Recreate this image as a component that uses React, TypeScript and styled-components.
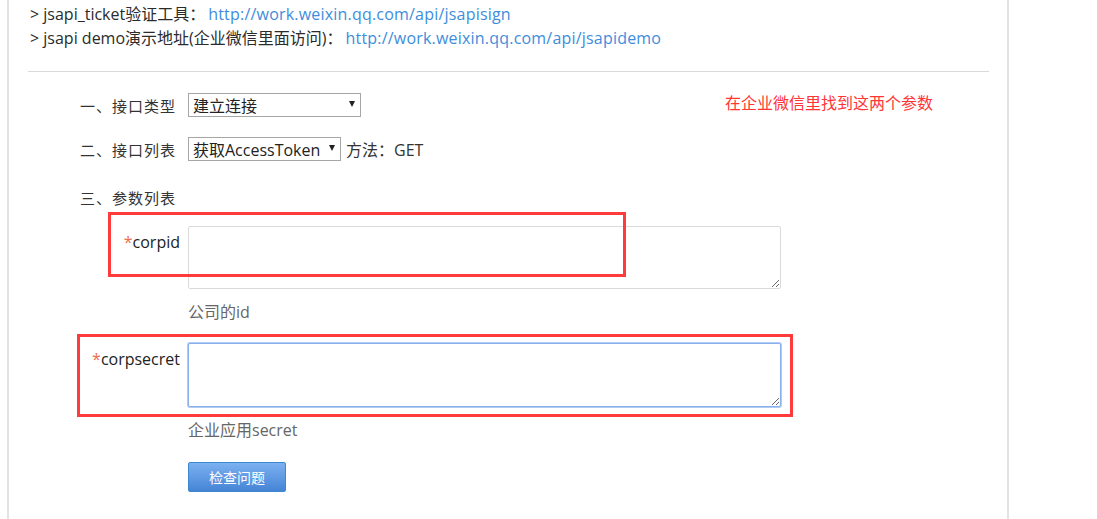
import React from "react";
import styled, { createGlobalStyle } from "styled-components";

const FONT = `"Open Sans", "Noto Sans CJK SC", sans-serif`;

const GlobalStyle = createGlobalStyle`
  html, body {
    margin: 0;
    padding: 0;
    background: #ffffff;
  }
  body {
    font-family: ${FONT};
    color: #333333;
  }
`;

const Page = styled.div`
  position: relative;
  width: 1097px;
  height: 519px;
  overflow: hidden;
`;

const Panel = styled.div`
  box-sizing: border-box;
  margin-left: 7px;
  width: 1002px;
  height: 519px;
  border-left: 2px solid #e3e3e3;
  border-right: 2px solid #e3e3e3;
  padding: 2px 18px 0 19px;
`;

const IntroLine = styled.div`
  padding-left: 2px;
  font-size: 16px;
  line-height: 24px;
  color: #2b2b2b;
  white-space: nowrap;
`;

const Link = styled.a`
  color: #3e8ddc;
  text-decoration: none;
  margin-left: 3px;
  letter-spacing: 0.2px;
`;

const Divider = styled.div`
  margin-top: 21px;
  height: 1px;
  background: #d9d9d9;
`;

const Form = styled.div`
  display: flex;
  flex-direction: column;
  padding-left: 52px;
  padding-top: 21px;
`;

const Row = styled.div<{ $mt?: number }>`
  display: flex;
  align-items: center;
  gap: 8px;
  height: 24px;
  margin-top: ${(p) => p.$mt ?? 0}px;
  font-size: 16px;
  color: #333333;
`;

const RowLabel = styled.div`
  width: 100px;
  white-space: nowrap;
  font-size: 15px;
  letter-spacing: 1px;
`;

const SelectBox = styled.div<{ $w: number }>`
  box-sizing: border-box;
  width: ${(p) => p.$w}px;
  height: 24px;
  border: 1px solid #a6a6a6;
  background: #ffffff;
  display: flex;
  align-items: center;
  justify-content: space-between;
  padding: 0 5px 0 4px;
  font-size: 16px;
  color: #222222;
  white-space: nowrap;
  overflow: hidden;
`;

const Arrow = styled.span`
  flex: none;
  width: 0;
  height: 0;
  border-left: 3.5px solid transparent;
  border-right: 3.5px solid transparent;
  border-top: 6px solid #222222;
  margin-top: -2px;
`;

const Method = styled.span`
  margin-left: -3px;
  font-size: 16px;
`;

const ParamRow = styled.div<{ $mt: number }>`
  display: flex;
  align-items: flex-start;
  gap: 8px;
  margin-top: ${(p) => p.$mt}px;
`;

const ParamLabel = styled.div`
  width: 100px;
  text-align: right;
  font-size: 16px;
  line-height: 24px;
  padding-top: 4px;
  color: #222222;
  white-space: nowrap;
`;

const Star = styled.span`
  color: #ef6c4e;
`;

const Area = styled.textarea<{ $focus?: boolean }>`
  box-sizing: border-box;
  width: 593px;
  height: ${(p) => (p.$focus ? 64 : 63)}px;
  margin: 0;
  border: 1px solid ${(p) => (p.$focus ? "#88b0ee" : "#dadada")};
  box-shadow: ${(p) => (p.$focus ? "0 0 0 1px #b2cbf3" : "none")};
  border-radius: 2px;
  outline: none;
  resize: both;
  font-family: inherit;
  font-size: 14px;
  background: #ffffff;
`;

const Hint = styled.div`
  margin-left: 108px;
  margin-top: 11px;
  font-size: 16px;
  line-height: 24px;
  color: #666666;
`;

const Button = styled.button`
  box-sizing: border-box;
  margin-left: 108px;
  margin-top: 20px;
  width: 98px;
  height: 30px;
  border: 1px solid #3d87cf;
  border-radius: 2px;
  background: linear-gradient(to bottom, #7cb1f1, #4584d5);
  color: #ffffff;
  font-family: ${FONT};
  font-size: 14px;
  padding: 0;
  align-self: flex-start;
`;

const Note = styled.div`
  position: absolute;
  left: 725px;
  top: 91px;
  font-size: 16px;
  line-height: 24px;
  color: #ff3535;
  white-space: nowrap;
`;

const Highlight = styled.div<{ $x: number; $y: number; $w: number; $h: number }>`
  position: absolute;
  box-sizing: border-box;
  left: ${(p) => p.$x}px;
  top: ${(p) => p.$y}px;
  width: ${(p) => p.$w}px;
  height: ${(p) => p.$h}px;
  border: 3px solid #ff3b3b;
  pointer-events: none;
`;

export default function App() {
  return (
    <>
      <GlobalStyle />
      <Page>
        <Panel>
          <IntroLine>
            &gt; jsapi_ticket验证工具：
            <Link href="#">http://work.weixin.qq.com/api/jsapisign</Link>
          </IntroLine>
          <IntroLine>
            &gt; jsapi demo演示地址(企业微信里面访问)：
            <Link href="#">http://work.weixin.qq.com/api/jsapidemo</Link>
          </IntroLine>
          <Divider />
          <Form>
            <Row>
              <RowLabel>一、接口类型</RowLabel>
              <SelectBox $w={173}>
                <span>建立连接</span>
                <Arrow />
              </SelectBox>
            </Row>
            <Row $mt={20}>
              <RowLabel>二、接口列表</RowLabel>
              <SelectBox $w={153}>
                <span>获取AccessToken</span>
                <Arrow />
              </SelectBox>
              <Method>方法：GET</Method>
            </Row>
            <Row $mt={24}>
              <RowLabel>三、参数列表</RowLabel>
            </Row>
            <ParamRow $mt={17}>
              <ParamLabel>
                <Star>*</Star>corpid
              </ParamLabel>
              <Area />
            </ParamRow>
            <Hint>公司的id</Hint>
            <ParamRow $mt={19}>
              <ParamLabel>
                <Star>*</Star>corpsecret
              </ParamLabel>
              <Area $focus />
            </ParamRow>
            <Hint>企业应用secret</Hint>
            <Button>检查问题</Button>
          </Form>
        </Panel>
        <Note>在企业微信里找到这两个参数</Note>
        <Highlight $x={108} $y={212} $w={518} $h={65} />
        <Highlight $x={77} $y={334} $w={716} $h={83} />
      </Page>
    </>
  );
}
